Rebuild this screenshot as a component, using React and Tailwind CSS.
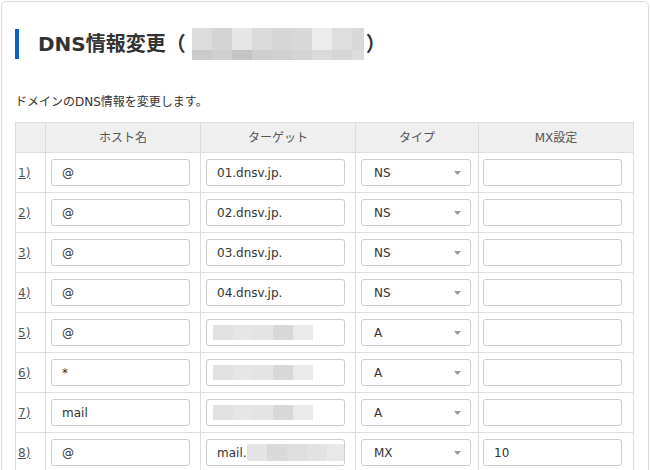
import React from "react";

const FONT = { fontFamily: '"DejaVu Sans", "Noto Sans CJK JP", sans-serif' };

// pixelated blur blocks (stand-ins for masked text)
const titleTop = ["bg-[#dcdcdc]", "bg-[#d4d4d4]", "bg-[#e6e6e6]", "bg-[#dadada]", "bg-[#d6d6d6]", "bg-[#d8d8d8]", "bg-[#ececec]", "bg-[#dedede]", "bg-[#d8d8d8]"];
const titleBottom = ["bg-[#cacaca]", "bg-[#d0d0d0]", "bg-[#c4c4c4]", "bg-[#cfcfcf]", "bg-[#d0d0d0]", "bg-[#d4d4d4]", "bg-[#dadada]", "bg-[#d6d6d6]", "bg-[#dcdcdc]"];
const targetBlur = ["bg-[#e2e2e2]", "bg-[#e6e6e6]", "bg-[#e3e3e3]", "bg-[#d8d8d8]", "bg-[#eaeaea]"];
const mailBlur = ["bg-[#e4e4e4]", "bg-[#d9d9d9]", "bg-[#dedede]", "bg-[#e2e2e2]", "bg-[#e8e8e8]"];

const rows = [
  { host: "@", target: "01.dnsv.jp.", type: "NS", mx: "" },
  { host: "@", target: "02.dnsv.jp.", type: "NS", mx: "" },
  { host: "@", target: "03.dnsv.jp.", type: "NS", mx: "" },
  { host: "@", target: "04.dnsv.jp.", type: "NS", mx: "" },
  { host: "@", blur: true, type: "A", mx: "" },
  { host: "*", blur: true, type: "A", mx: "" },
  { host: "mail", blur: true, type: "A", mx: "" },
  { host: "@", target: "mail.", mailBlur: true, type: "MX", mx: "10" },
];

const Field = ({ children, width = "w-[139px]" }) => (
  <div className={`${width} h-[27px] border border-[#cccccc] rounded-[3px] bg-white flex items-center pl-[10px] text-[12px] text-[#333] overflow-hidden`}>
    {children}
  </div>
);

const Cell = ({ children, className = "" }) => (
  <div className={`border-r border-b border-[#dddddd] ${className}`}>{children}</div>
);

export default function App() {
  return (
    <div className="w-[650px] h-[470px] overflow-hidden bg-white pl-[1px] pt-[1px]" style={FONT}>
      <div className="w-[648px] h-[520px] border border-[#dddddd] rounded-[5px] px-[13px] pt-[27px]">
        {/* Heading */}
        <div className="h-[30px] border-l-4 border-[#0b62c4] pl-[19px] flex items-center">
          <span className="text-[20px] font-bold text-[#333] leading-none">DNS情報変更（</span>
          <div className="ml-[6px] flex flex-col">
            <div className="flex">
              {titleTop.map((c, i) => (
                <div key={i} className={`${i === 8 ? "w-[12px]" : "w-[20px]"} h-[22px] ${c}`} />
              ))}
            </div>
            <div className="flex">
              {titleBottom.map((c, i) => (
                <div key={i} className={`${i === 8 ? "w-[12px]" : "w-[20px]"} h-[10px] ${c}`} />
              ))}
            </div>
          </div>
          <span className="ml-[2px] text-[20px] font-bold text-[#333] leading-none">）</span>
        </div>

        <p className="mt-[34px] h-[18px] leading-[18px] text-[12px] text-[#333]">ドメインのDNS情報を変更します。</p>

        {/* Records table */}
        <div className="mt-[11px] w-[619px] grid grid-cols-[30px_155px_155px_123px_155px] border-l border-t border-[#dddddd] text-[12px]">
          <Cell className="h-[30px] bg-[#efefef]" />
          <Cell className="h-[30px] bg-[#efefef] flex items-center justify-center text-[#555]">ホスト名</Cell>
          <Cell className="h-[30px] bg-[#efefef] flex items-center justify-center text-[#555]">ターゲット</Cell>
          <Cell className="h-[30px] bg-[#efefef] flex items-center justify-center text-[#555]">タイプ</Cell>
          <Cell className="h-[30px] bg-[#efefef] flex items-center justify-center text-[#555]">MX設定</Cell>

          {rows.map((r, i) => (
            <React.Fragment key={i}>
              <Cell className="h-[40px] flex items-center pl-[2px]">
                <span className="underline text-[#555555] text-[12px]">{i + 1})</span>
              </Cell>
              <Cell className="h-[40px] flex items-center pl-[5px]">
                <Field>{r.host}</Field>
              </Cell>
              <Cell className="h-[40px] flex items-center pl-[5px]">
                <Field>
                  {r.blur ? (
                    <div className="flex ml-[-4px]">
                      {targetBlur.map((c, k) => (
                        <div key={k} className={`w-[20px] h-[15px] ${c}`} />
                      ))}
                    </div>
                  ) : (
                    <>
                      <span>{r.target}</span>
                      {r.mailBlur && (
                        <div className="flex">
                          {mailBlur.map((c, k) => (
                            <div key={k} className={`w-[20px] h-[17px] ${c}`} />
                          ))}
                        </div>
                      )}
                    </>
                  )}
                </Field>
              </Cell>
              <Cell className="h-[40px] flex items-center pl-[5px]">
                <div className="w-[110px] h-[27px] border border-[#cccccc] rounded-[3px] bg-white flex items-center justify-between pl-[12px] pr-[9px] text-[12px] text-[#333]">
                  <span>{r.type}</span>
                  <svg width="7" height="4" viewBox="0 0 7 4">
                    <path d="M0 0H7L3.5 4Z" fill="#999" />
                  </svg>
                </div>
              </Cell>
              <Cell className="h-[40px] flex items-center pl-[4px]">
                <Field width="w-[139px]">{r.mx}</Field>
              </Cell>
            </React.Fragment>
          ))}
        </div>
      </div>
    </div>
  );
}
